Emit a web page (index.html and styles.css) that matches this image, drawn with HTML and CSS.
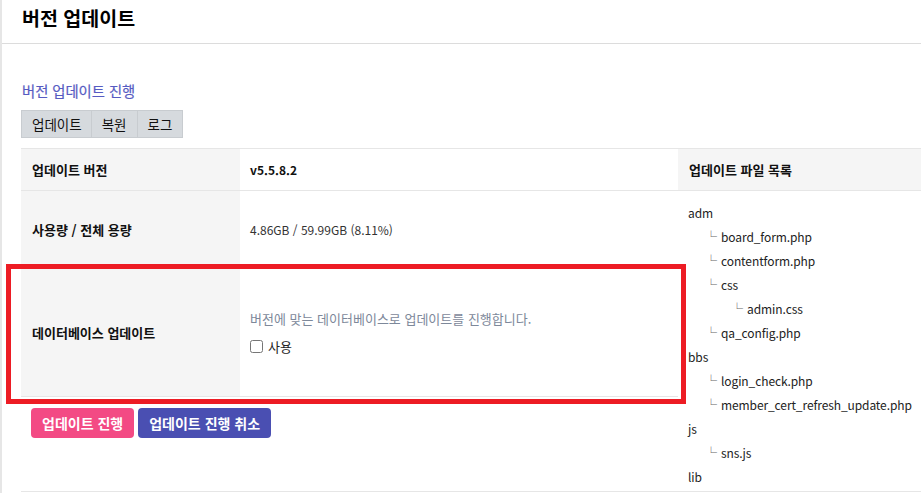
FILE: index.html
```html
<!DOCTYPE html>
<html lang="ko">
<head>
<meta charset="utf-8">
<title>버전 업데이트</title>
<link rel="stylesheet" href="styles.css">
</head>
<body>
<div class="page">
  <header class="page-head">
    <h1 class="page-title">버전 업데이트</h1>
  </header>
  <main class="content">
    <h2 class="section-title">버전 업데이트 진행</h2>
    <nav class="tabs">
      <span class="tab">업데이트</span>
      <span class="tab">복원</span>
      <span class="tab">로그</span>
    </nav>
    <table class="info">
      <colgroup>
        <col class="c1"><col class="c2"><col class="c3">
      </colgroup>
      <tr class="r1">
        <th>업데이트 버전</th>
        <td class="ver">v5.5.8.2</td>
        <th class="files-head">업데이트 파일 목록</th>
      </tr>
      <tr class="r2">
        <th>사용량 / 전체 용량</th>
        <td class="usage">4.86GB / 59.99GB (8.11%)</td>
        <td class="files" rowspan="3">
          <ul class="tree">
            <li>adm</li>
            <li class="l1"><span class="br">└</span>board_form.php</li>
            <li class="l1"><span class="br">└</span>contentform.php</li>
            <li class="l1"><span class="br">└</span>css</li>
            <li class="l2"><span class="br">└</span>admin.css</li>
            <li class="l1"><span class="br">└</span>qa_config.php</li>
            <li>bbs</li>
            <li class="l1"><span class="br">└</span>login_check.php</li>
            <li class="l1"><span class="br">└</span>member_cert_refresh_update.php</li>
            <li>js</li>
            <li class="l1"><span class="br">└</span>sns.js</li>
            <li>lib</li>
          </ul>
        </td>
      </tr>
      <tr class="r3">
        <th>데이터베이스 업데이트</th>
        <td>
          <p class="desc">버전에 맞는 데이터베이스로 업데이트를 진행합니다.</p>
          <label class="check"><input type="checkbox"> 사용</label>
        </td>
      </tr>
      <tr class="r4">
        <td class="actions" colspan="2">
          <div class="btns">
            <button class="btn btn-go" type="button">업데이트 진행</button>
            <button class="btn btn-cancel" type="button">업데이트 진행 취소</button>
          </div>
        </td>
      </tr>
    </table>
  </main>
  <div class="highlight"></div>
</div>
</body>
</html>
```
FILE: styles.css
```css
html, body {
  margin: 0;
  padding: 0;
  overflow: hidden;
  background: #fff;
}
body {
  font-family: "Noto Sans CJK KR", "Noto Sans", sans-serif;
  color: #222;
  font-size: 12px;
}
.page {
  position: relative;
  width: 919px;
  height: 493px;
  border-left: 2px solid #e6e6e6;
}
.page-head {
  border-bottom: 1px solid #dcdcdc;
  padding-left: 20px;
  box-sizing: border-box;
  height: 44px;
}
.page-title {
  margin: 0;
  padding-top: 5px;
  font-size: 19.5px;
  line-height: 26px;
  font-weight: bold;
  color: #000;
}
.content {
  padding-left: 19px;
}
.section-title {
  margin: 38px 0 0 1px;
  font-size: 14.3px;
  line-height: 18px;
  font-weight: normal;
  color: #565bc2;
  -webkit-text-stroke: 0.2px #565bc2;
}
.tabs {
  display: flex;
  width: max-content;
  margin-top: 10px;
  border: 1px solid #c8ccd0;
  background: #d6dade;
}
.tab {
  height: 26px;
  line-height: 26px;
  padding: 0 10px;
  font-size: 13.5px;
  color: #111;
  border-left: 1px solid #c8ccd0;
}
.tab:first-child { border-left: 0; padding: 0 9px 0 10px; }
.info {
  margin-top: 10px;
  border-collapse: collapse;
  table-layout: fixed;
  width: 1000px;
}
.c1 { width: 219px; }
.c2 { width: 438px; }
.c3 { width: 343px; }
.info tr { border-top: 1px solid #e6e6e6; border-bottom: 1px solid #e6e6e6; }
.info th {
  background: #f5f5f5;
  text-align: left;
  font-weight: bold;
  color: #111;
  padding: 0 0 0 11px;
  font-size: 13px;
}
.info td {
  padding: 0 0 0 10px;
  color: #333;
  font-size: 13px;
}
.r1 { height: 42px; }
.r2 { height: 78px; }
.r3 { height: 128px; }
.r4 { height: 95px; }
.info .files-head { padding-left: 11px; }
.info td.ver { font-weight: bold; color: #111; font-size: 12px; }
.info td.usage { font-size: 12px; }
.info td.files {
  vertical-align: top;
  padding: 10px 0 0 10px;
  font-size: 12px;
}
.tree {
  list-style: none;
  margin: 0;
  padding: 0;
}
.tree li {
  line-height: 24px;
  color: #222;
  white-space: nowrap;
  letter-spacing: -0.1px;
}
.tree .l1 { padding-left: 17px; }
.tree .l2 { padding-left: 43px; }
.br {
  display: inline-block;
  width: 16px;
  color: #666;
}
.desc {
  margin: 0;
  line-height: 20px;
  color: #7d889a;
}
.check {
  display: flex;
  align-items: center;
  gap: 5px;
  margin-top: 8px;
  line-height: 20px;
  color: #222;
}
.check input {
  margin: 0;
  width: 13px;
  height: 13px;
}
.info td.actions {
  vertical-align: top;
  padding: 11px 0 0 10px;
}
.btns {
  display: flex;
  gap: 4px;
}
.btn {
  height: 30px;
  padding: 0 11px;
  border: 0;
  border-radius: 4px;
  color: #fff;
  font-family: "Noto Sans CJK KR", sans-serif;
  font-size: 14px;
  font-weight: bold;
  line-height: 30px;
}
.btn-go { background: #f34a84; }
.btn-cancel { background: #4a4fb2; }
.highlight {
  position: absolute;
  left: 4px;
  top: 264px;
  width: 670px;
  height: 130px;
  border: 5px solid #ed1c24;
}
```
